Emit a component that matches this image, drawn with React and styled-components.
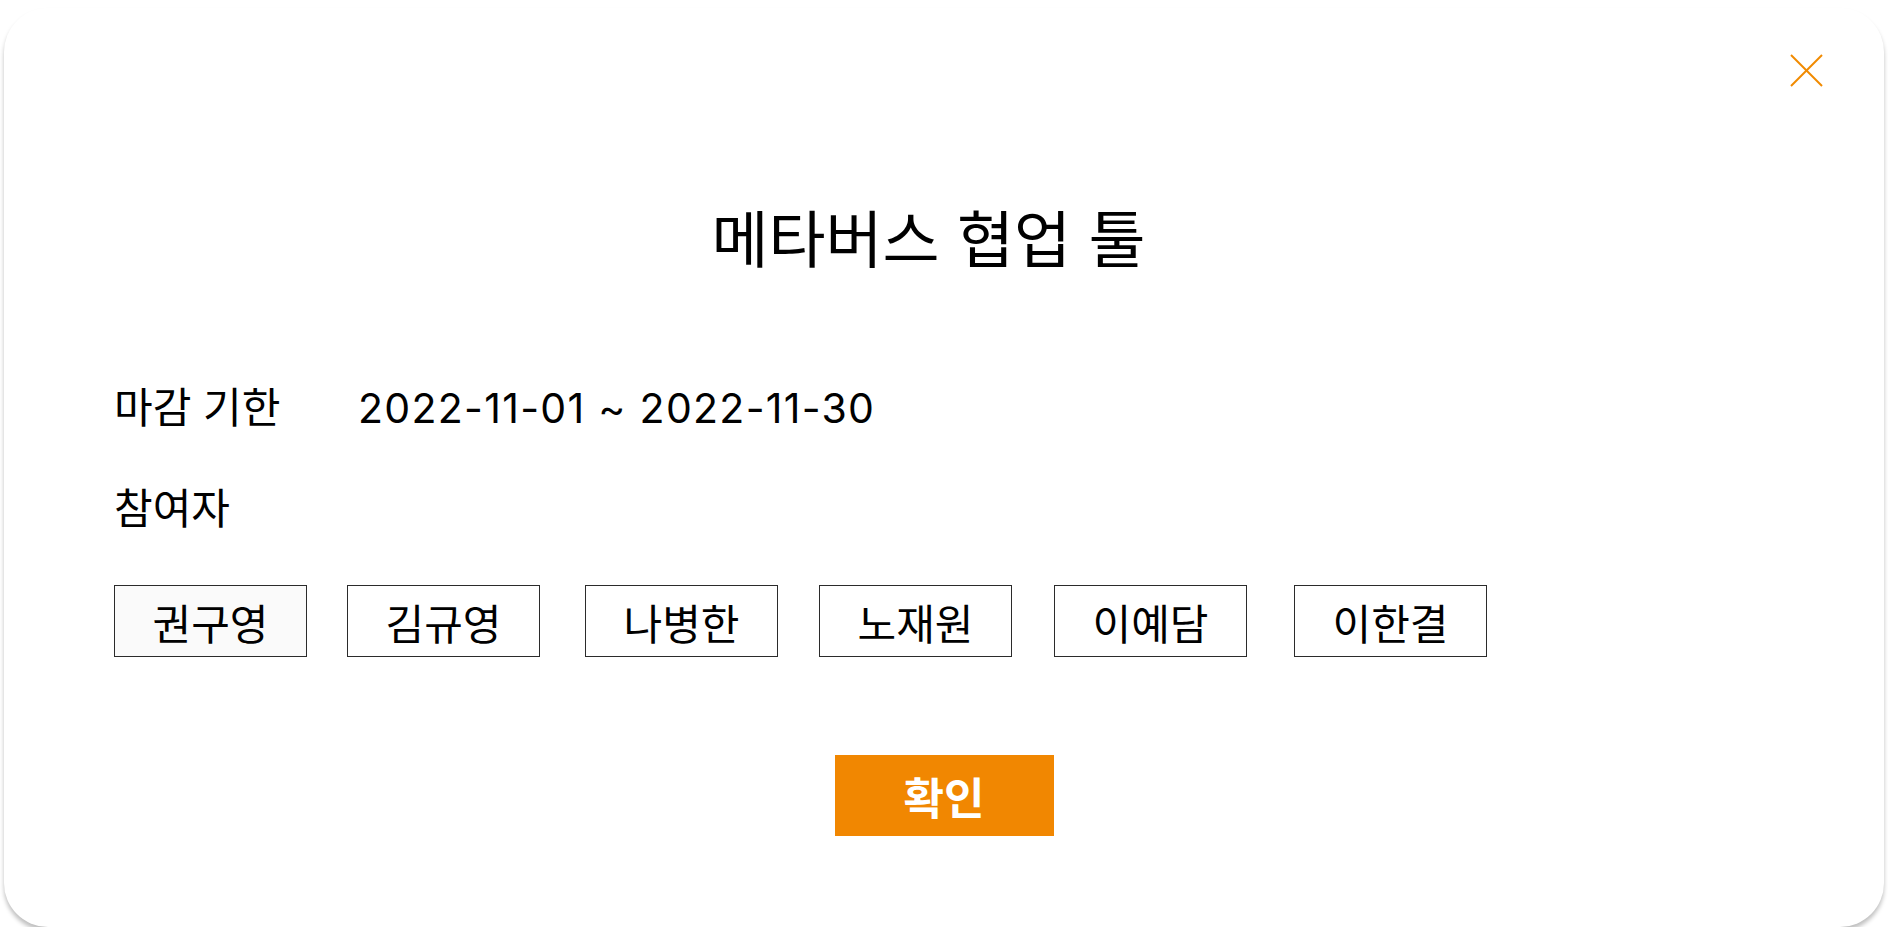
import styled, { createGlobalStyle } from 'styled-components';

const participants = [
  { name: '권구영', gap: 0, selected: true },
  { name: '김규영', gap: 40 },
  { name: '나병한', gap: 45 },
  { name: '노재원', gap: 41 },
  { name: '이예담', gap: 42 },
  { name: '이한결', gap: 47 },
];

const App = () => {
  return (
    <>
      <GlobalStyle />
      <Page>
        <Modal>
          <CloseRow>
            <CloseButton aria-label="닫기">
              <svg width="33" height="33" viewBox="0 0 33 33">
                <line x1="1" y1="1" x2="32" y2="32" stroke="#F18A00" strokeWidth="2" />
                <line x1="32" y1="1" x2="1" y2="32" stroke="#F18A00" strokeWidth="2" />
              </svg>
            </CloseButton>
          </CloseRow>

          <Title>메타버스 협업 툴</Title>

          <InfoRow>
            <Label>마감 기한</Label>
            <Value>2022-11-01 ~ 2022-11-30</Value>
          </InfoRow>

          <SectionLabel>참여자</SectionLabel>

          <ParticipantList>
            {participants.map((p) => (
              <Participant key={p.name} $gap={p.gap} $selected={p.selected}>
                {p.name}
              </Participant>
            ))}
          </ParticipantList>

          <Footer>
            <ConfirmButton>확인</ConfirmButton>
          </Footer>
        </Modal>
      </Page>
    </>
  );
};

// Styled Components
const GlobalStyle = createGlobalStyle`
  body {
    margin: 0;
    background: #ffffff;
    font-family: "Inter", "Noto Sans CJK KR", sans-serif;
    color: #000000;
  }
`;

const Page = styled.div`
  padding: 8px 4px 0 4px;
`;

const Modal = styled.div`
  display: flex;
  flex-direction: column;
  height: 919px;
  box-sizing: border-box;
  padding: 46px 61px 0 110px;
  background: #ffffff;
  border-radius: 44px;
  box-shadow: 0 4px 4px rgba(0, 0, 0, 0.25);
`;

const CloseRow = styled.div`
  display: flex;
  justify-content: flex-end;
  height: 33px;
`;

const CloseButton = styled.button`
  width: 33px;
  height: 33px;
  padding: 0;
  border: none;
  background: transparent;
  display: flex;
  cursor: pointer;
`;

const Title = styled.h1`
  margin: 118px 0 0 0;
  padding-right: 80px;
  font-size: 62px;
  line-height: 72px;
  font-weight: 400;
  text-align: center;
`;

const InfoRow = styled.div`
  display: flex;
  align-items: center;
  margin-top: 107px;
  font-size: 42px;
  line-height: 48px;
`;

const Label = styled.span`
  width: 244px;
  flex-shrink: 0;
`;

const Value = styled.span`
  font-size: 41px;
  letter-spacing: 1.3px;
`;

const SectionLabel = styled.div`
  margin-top: 53px;
  font-size: 42px;
  line-height: 48px;
`;

const ParticipantList = styled.div`
  display: flex;
  margin-top: 52px;
`;

const Participant = styled.div`
  width: 193px;
  height: 72px;
  box-sizing: border-box;
  margin-left: ${({ $gap }) => $gap}px;
  display: flex;
  align-items: center;
  justify-content: center;
  border: 1px solid #2b2b2b;
  background: ${({ $selected }) => ($selected ? '#fafafa' : '#ffffff')};
  font-size: 42px;
`;

const Footer = styled.div`
  display: flex;
  justify-content: center;
  margin-top: 98px;
  margin-left: -49px;
`;

const ConfirmButton = styled.button`
  width: 219px;
  height: 81px;
  border: none;
  background: #f18701;
  color: #ffffff;
  font-family: "Noto Sans CJK KR", sans-serif;
  font-size: 44px;
  font-weight: 700;
  cursor: pointer;
`;

export default App;
